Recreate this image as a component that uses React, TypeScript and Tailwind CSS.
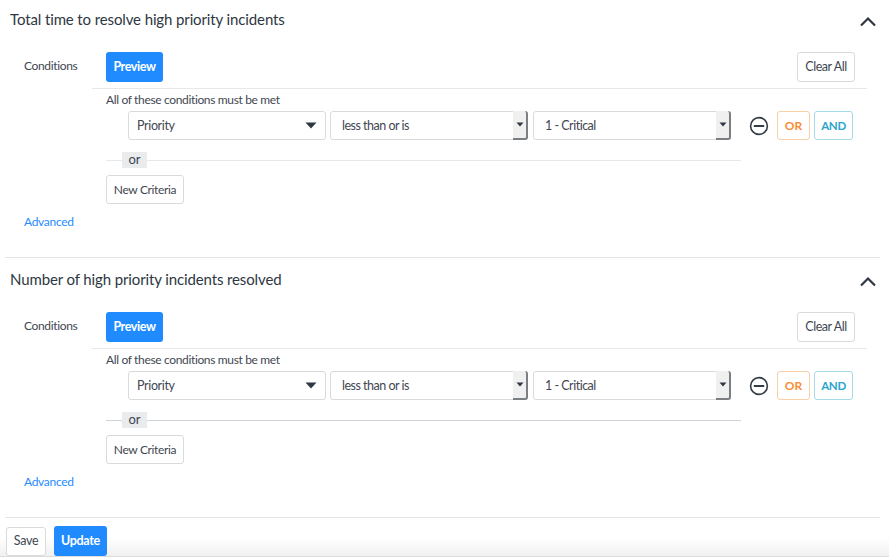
const font = { fontFamily: '"Lato", "Open Sans", sans-serif' }

const SmallArrow = () => (
  <svg width="8" height="5" viewBox="0 0 8 5" className="fill-[#2e3742]">
    <path d="M0.5 0.5h7L4 4.5z" />
  </svg>
)

const NativeSelect = ({ label }: { label: string }) => (
  <div className="flex h-[29px] w-[198px] items-stretch rounded-[3px] border border-[#d8dadc] bg-white">
    <div className="flex flex-1 items-center pl-[11px] pt-px text-[12.5px] tracking-[-0.5px] text-[#3f4752]">{label}</div>
    <div className="-my-px -mr-px flex w-[15px] items-center justify-center rounded-r-[3px] border-r-2 border-b-2 border-r-[#7b7f84] border-b-[#7b7f84] bg-[#f0f0f0]">
      <SmallArrow />
    </div>
  </div>
)

const Section = ({ title, lineClass }: { title: string; lineClass: string }) => (
  <section className="mb-[2px] ml-[5px] mr-[9px] flex h-[258px] flex-col border-b border-[#e3e5e8]">
    <div className="flex h-[52px] shrink-0 items-start justify-between pl-[5px] pr-[3px] pt-[9px]">
      <h2 className="text-[15px] leading-[20px] font-normal tracking-[-0.12px] text-[#2e3742]">{title}</h2>
      <svg width="18" height="11" viewBox="0 0 18 11" fill="none" className="mt-[7px] stroke-[#2e3742]" strokeWidth="2.2">
        <path d="M2 9.5 9 2.5l7 7" />
      </svg>
    </div>
    <div className="mr-[13px] flex">
      <div className="w-[87px] shrink-0 pl-[19px] pt-[5px] text-[12px] leading-[18px] tracking-[-0.35px] text-[#3f4752]">Conditions</div>
      <div className="flex-1">
        <div className="flex h-[37px] justify-between border-b border-[#e6e8ea] pl-[14px] pr-[12px]">
          <button className="h-[30px] w-[57px] rounded-[3px] bg-[#1f8bff] pt-px text-[12.5px] font-bold tracking-[-0.4px] text-white">Preview</button>
          <button className="h-[30px] w-[58px] rounded-[3px] border border-[#d8dadc] bg-white pt-px text-[12.5px] tracking-[-0.45px] text-[#3f4752]">Clear All</button>
        </div>
        <div className="pl-[14px]">
          <div className="mt-[3px] text-[12px] leading-[16px] tracking-[-0.35px] text-[#3f4752]">All of these conditions must be met</div>
          <div className="mt-[3px] flex items-center pl-[22px]">
            <div className="mr-[4px] flex h-[29px] w-[198px] items-center justify-between rounded-[3px] border border-[#d8dadc] bg-white px-[8px] text-[12.5px] tracking-[-0.35px] text-[#3f4752]">
              <span className="pt-px">Priority</span>
              <svg width="12" height="7" viewBox="0 0 12 7" className="fill-[#2e3742]">
                <path d="M0.5 0.5h11L6 6.5z" />
              </svg>
            </div>
            <NativeSelect label="less than or is" />
            <div className="w-[5px]" />
            <NativeSelect label="1 - Critical" />
            <svg width="20" height="20" viewBox="0 0 20 20" fill="none" className="ml-[18px] stroke-[#333c47]" strokeWidth="1.6">
              <circle cx="10" cy="10" r="8.4" />
              <path d="M4.8 10h10.4" strokeWidth="2" />
            </svg>
            <button className="ml-[8px] h-[29px] w-[33px] rounded-[3px] border border-[#fbcfa8] text-[12px] font-bold text-[#fb8c33]">OR</button>
            <button className="ml-[4px] h-[29px] w-[39px] rounded-[3px] border border-[#a5d9e6] text-[11.5px] font-bold tracking-[-0.3px] text-[#2aa5c9]">AND</button>
          </div>
          <div className="relative mt-[12px] h-[16px] w-[635px]">
            <div className={`absolute inset-x-0 top-[8px] h-px ${lineClass}`} />
            <div className="absolute left-[16px] top-0 flex h-[16px] w-[25px] items-center justify-center bg-[#e9ebed] text-[13px] text-[#3f4752]">or</div>
          </div>
          <button className="mt-[7px] h-[29px] w-[78px] rounded-[3px] border border-[#d8dadc] bg-white pt-px text-[12px] tracking-[-0.35px] text-[#3f4752]">New Criteria</button>
        </div>
      </div>
    </div>
    <a className="ml-[19px] mt-[9px] text-[12px] leading-[18px] tracking-[-0.3px] text-[#1f8bff]">Advanced</a>
  </section>
)

export default function App() {
  return (
    <div style={font} className="flex h-[557px] w-[889px] flex-col overflow-hidden bg-white">
      <Section title="Total time to resolve high priority incidents" lineClass="bg-[#e6e8ea]" />
      <Section title="Number of high priority incidents resolved" lineClass="bg-[#cfd4da]" />
      <div className="flex flex-1 items-center gap-[8px] border-b border-[#dcdcdc] bg-gradient-to-b from-white from-50% to-[#f0f0f0] pl-[6px] pt-[6px]">
        <button className="h-[29px] w-[40px] rounded-[3px] border border-[#d8dadc] bg-white pt-px text-[12.5px] tracking-[-0.3px] text-[#3f4752]">Save</button>
        <button className="h-[30px] w-[53px] rounded-[3px] bg-[#1f8bff] pt-px text-[12.5px] font-bold tracking-[-0.3px] text-white">Update</button>
      </div>
    </div>
  )
}
